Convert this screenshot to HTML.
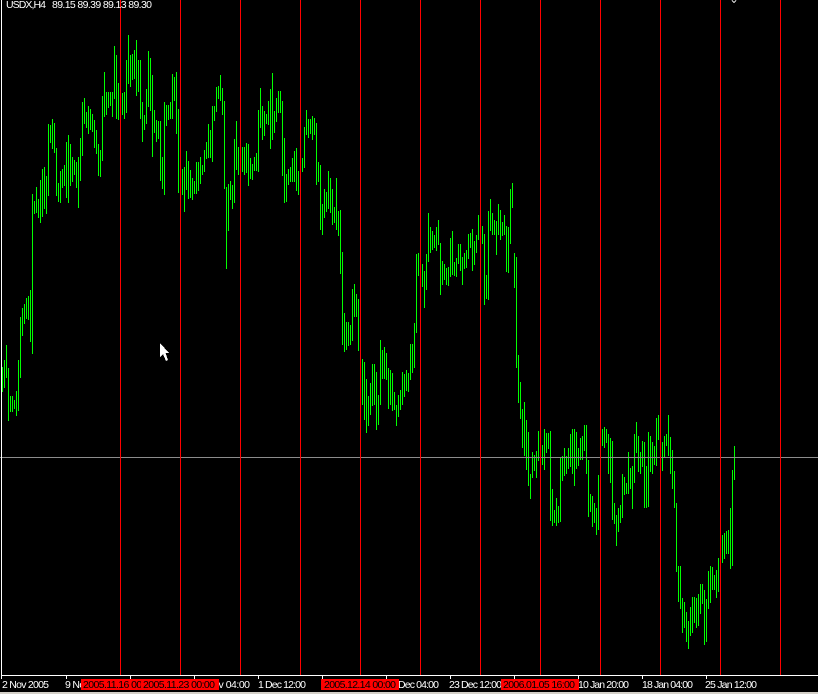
<!DOCTYPE html>
<html><head><meta charset="utf-8"><title>USDX,H4</title>
<style>html,body{margin:0;padding:0;background:#000;width:818px;height:694px;overflow:hidden}svg{display:block}text{font-family:"Liberation Sans",sans-serif;font-size:10.5px}</style></head>
<body>
<svg width="818" height="694" viewBox="0 0 818 694" xmlns="http://www.w3.org/2000/svg">
<rect width="818" height="694" fill="#000"/>
<path transform="translate(.5 0)" fill="none" stroke="#0f0" stroke-width="1" shape-rendering="crispEdges" d="M2 367V392M4 360V388M6 345V378M8 368V421M10 396V412M12 396V412M14 400V409M16 391V416M18 360V411M20 317V378M22 308V336M24 304V324M26 298V319M28 296V320M30 290V342M32 194V354M34 201V214M36 187V213M38 199V218M40 180V223M42 169V217M44 167V209M46 176V214M48 124V196M50 125V143M52 119V149M54 123V153M56 148V196M58 183V202M60 171V203M62 169V188M64 165V186M66 142V198M68 135V203M70 144V186M72 157V182M74 160V175M76 162V188M78 157V208M80 138V181M82 102V156M84 98V124M86 112V128M88 106V134M90 109V130M92 114V132M94 120V148M96 130V154M98 144V176M100 150V177M102 96V161M104 72V117M106 92V115M108 92V108M110 92V106M112 92V117M114 46V99M116 55V119M118 83V120M122 93V115M124 92V119M126 60V113M128 35V84M130 55V87M132 54V80M134 50V79M136 40V96M138 60V92M140 60V119M142 102V142M144 115V130M146 89V124M148 51V107M150 58V111M152 75V157M154 110V133M156 120V142M158 121V139M160 121V181M162 157V189M164 102V195M166 105V126M168 105V120M170 102V119M172 74V119M174 77V101M176 72V134M178 109V193M182 169V195M184 167V212M186 151V190M188 161V199M190 170V198M192 178V200M194 181V194M196 162V194M198 162V191M200 157V184M202 165V175M204 150V172M206 142V159M208 124V158M210 130V158M212 106V162M214 106V121M216 87V112M218 86V99M220 75V101M222 88V115M224 101V189M226 187V269M228 184V231M230 181V200M232 185V209M234 139V203M236 121V170M238 147V175M242 147V172M244 147V175M246 143V173M248 144V186M250 158V179M252 164V180M254 157V171M256 153V171M258 110V172M260 88V128M262 106V140M264 111V136M266 114V124M268 101V125M270 89V149M272 73V140M274 111V133M276 98V122M278 91V113M280 91V113M282 101V176M284 138V203M286 174V202M288 169V185M290 167V182M292 158V182M294 151V182M296 148V191M298 171V195M302 158V172M304 127V168M306 110V135M308 119V138M310 119V134M312 116V140M314 118V135M316 123V185M318 162V182M320 165V230M322 204V235M324 189V218M326 192V212M328 171V209M330 178V213M332 189V225M334 207V223M336 178V230M338 211V236M340 210V274M342 252V345M344 313V352M346 322V350M348 322V346M350 325V345M352 289V341M354 284V317M356 294V317M358 299V351M362 359V405M364 362V420M366 379V433M368 396V426M370 383V415M372 364V406M374 364V405M376 372V430M378 395V425M380 340V405M382 350V379M384 347V379M386 353V380M388 368V409M390 370V405M392 373V411M394 392V410M396 405V426M398 395V417M400 390V410M402 372V405M404 374V397M406 370V391M408 373V392M410 344V380M412 344V373M414 323V368M416 254V333M418 253V276M422 264V287M424 271V308M426 254V290M428 213V262M430 227V253M432 231V250M434 235V248M436 227V251M438 220V245M440 243V295M442 261V285M444 264V280M446 268V285M448 267V286M450 238V277M452 231V275M454 262V276M456 258V277M458 244V264M460 244V271M462 257V285M464 253V269M466 250V268M468 234V259M470 233V248M472 229V271M474 241V265M476 235V253M478 215V240M482 226V244M484 234V305M486 275V299M488 211V300M490 199V231M492 213V235M494 220V235M496 221V255M498 204V235M500 210V240M502 222V236M504 215V235M506 226V272M508 227V273M510 189V244M512 183V208M514 253V288M516 257V368M518 355V403M520 382V419M522 409V448M524 402V456M526 420V470M528 432V486M530 474V499M532 452V478M534 455V471M536 451V478M538 431V461M542 445V465M544 429V470M546 433V453M548 433V449M550 431V521M552 489V526M554 510V523M556 498V526M558 506V523M560 457V522M562 456V481M564 448V476M566 456V474M568 448V469M570 434V467M572 429V474M574 429V486M576 432V469M578 448V466M580 438V460M582 436V460M584 425V451M586 425V474M588 460V517M590 494V512M592 496V527M594 503V523M596 508V535M598 475V530M602 429V446M604 427V448M606 429V443M608 434V474M610 438V483M612 441V520M614 503V524M616 515V546M618 508V532M620 505V523M622 474V518M624 477V495M626 483V494M628 452V494M630 468V489M632 466V509M634 434V483M636 422V453M638 436V472M640 452V474M642 441V467M644 442V508M646 466V508M648 432V507M650 436V472M652 442V474M654 446V465M656 418V466M658 415V440M662 442V471M664 436V458M666 434V446M668 415V456M670 437V474M672 450V489M674 471V508M676 503V572M678 566V602M680 566V609M682 598V633M684 602V628M686 612V642M688 621V649M690 607V636M692 597V633M694 597V623M696 598V628M698 594V626M700 584V614M702 584V604M704 590V645M706 599V642M708 571V609M710 566V603M712 567V590M714 575V590M716 570V598M718 558V592M722 535V563M724 533V559M726 531V554M728 530V554M730 508V569M732 470V566M734 446V480"/>
<rect x="0" y="457" width="818" height="1" fill="#8c8c8c"/>
<path transform="translate(.5 0)" fill="none" stroke="#f00" stroke-width="1" shape-rendering="crispEdges" d="M120 0V675M180 0V675M240 0V675M300 0V675M360 0V675M420 0V675M480 0V675M540 0V675M600 0V675M660 0V675M720 0V675M780 0V675"/>
<path fill="none" stroke="#d8d8d8" stroke-width="1" shape-rendering="crispEdges" d="M732 0.5L734 2.5L736 0.5"/>
<rect x="1" y="0" width="1" height="676" fill="#fff"/>
<rect x="1" y="675" width="817" height="1" fill="#fff"/>
<path transform="translate(.5 0)" fill="none" stroke="#fff" stroke-width="1" shape-rendering="crispEdges" d="M1 675V679M66 675V679M130 675V679M194 675V679M258 675V679M322 675V679M386 675V679M450 675V679M514 675V679M578 675V679M642 675V679M706 675V679"/>
<text x="6" y="8" fill="#fff" textLength="40" lengthAdjust="spacing">USDX,H4</text>
<text x="52" y="8" fill="#fff" textLength="100" lengthAdjust="spacing">89.15 89.39 89.13 89.30</text>
<g fill="#fff">
<text x="2" y="688" textLength="47" lengthAdjust="spacing">2 Nov 2005</text>
<text x="65" y="688" textLength="50" lengthAdjust="spacing">9 Nov 12:00</text>
<text x="193" y="688" textLength="57" lengthAdjust="spacing">25 Nov 04:00</text>
<text x="258" y="688" textLength="48" lengthAdjust="spacing">1 Dec 12:00</text>
<text x="386" y="688" textLength="53" lengthAdjust="spacing">18 Dec 04:00</text>
<text x="449" y="688" textLength="53" lengthAdjust="spacing">23 Dec 12:00</text>
<text x="578" y="688" textLength="51" lengthAdjust="spacing">10 Jan 20:00</text>
<text x="642" y="688" textLength="51" lengthAdjust="spacing">18 Jan 04:00</text>
<text x="705" y="688" textLength="52" lengthAdjust="spacing">25 Jan 12:00</text>
</g>
<rect x="81" y="679" width="76" height="11" fill="#f00"/>
<text x="83" y="688" fill="#000" textLength="72" lengthAdjust="spacing">2005.11.16 00:00</text>
<rect x="141" y="679" width="78" height="11" fill="#f00"/>
<text x="143" y="688" fill="#000" textLength="72" lengthAdjust="spacing">2005.11.23 00:00</text>
<rect x="321" y="679" width="78" height="11" fill="#f00"/>
<text x="324" y="688" fill="#000" textLength="72" lengthAdjust="spacing">2005.12.14 00:00</text>
<rect x="501" y="679" width="78" height="11" fill="#f00"/>
<text x="503" y="688" fill="#000" textLength="72" lengthAdjust="spacing">2006.01.05 16:00</text>
<rect x="0" y="692" width="818" height="2" fill="#d4d0c8"/>
<path d="M160 343V357L163 354L166 361L168 360L165.500 353H169Z" fill="#fff" shape-rendering="crispEdges"/>
</svg>
</body></html>
